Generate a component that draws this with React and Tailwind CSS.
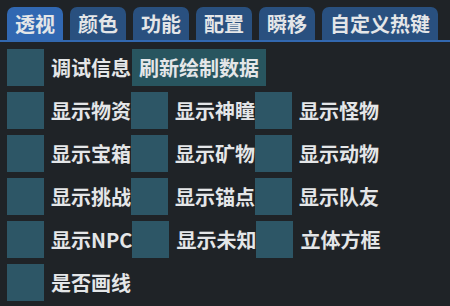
const tabs = ["透视", "颜色", "功能", "配置", "瞬移", "自定义热键"];

const rows = [
  ["显示物资", "显示神瞳", "显示怪物"],
  ["显示宝箱", "显示矿物", "显示动物"],
  ["显示挑战", "显示锚点", "显示队友"],
  ["显示NPC", "显示未知", "立体方框"],
  ["是否画线"],
];

function Check({ label }) {
  return (
    <div className="flex items-center">
      <div className="w-[37px] h-[37px] bg-[#2d5666] shrink-0" />
      <span className="ml-[7px] leading-none">{label}</span>
    </div>
  );
}

export default function App() {
  return (
    <div
      className="w-[450px] h-[306px] overflow-hidden bg-[#1f2327] text-[#e4e6e8] text-[20px] font-bold"
      style={{ fontFamily: '"Noto Sans CJK SC", "Noto Sans", sans-serif' }}
    >
      {/* Tab bar */}
      <div className="flex gap-[7px] pl-[7px] pt-[7px] border-b-2 border-[#3268b0]">
        {tabs.map((t, i) => (
          <div
            key={t}
            className={`h-[33px] px-[8px] flex items-center rounded-t-[7px] leading-none ${
              i === 0 ? "bg-[#3168b2]" : "bg-[#29507f]"
            }`}
          >
            {t}
          </div>
        ))}
      </div>

      {/* Content */}
      <div className="flex flex-col gap-[6px] pl-[7px] pt-[7px]">
        <div className="flex items-center">
          <Check label="调试信息" />
          <div className="ml-px h-[37px] px-[7px] flex items-center bg-[#28555f] leading-none">
            刷新绘制数据
          </div>
        </div>
        {rows.map((r, i) => (
          <div key={i} className="flex items-center">
            {r.map((l) => (
              <Check key={l} label={l} />
            ))}
          </div>
        ))}
      </div>
    </div>
  );
}
